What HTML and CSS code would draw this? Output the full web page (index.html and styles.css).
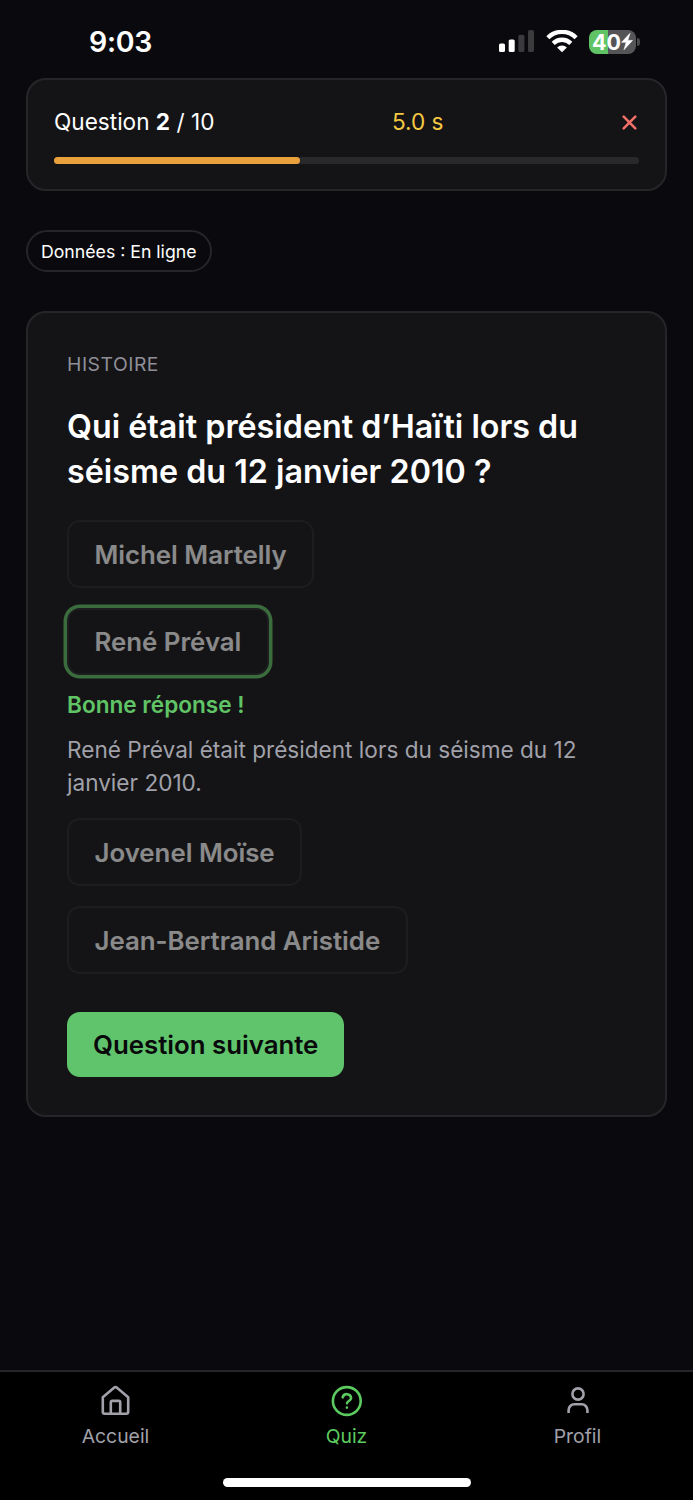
FILE: index.html
```
<!DOCTYPE html>
<html lang="fr">
<head>
    <meta charset="UTF-8">
    <meta name="viewport" content="width=device-width, initial-scale=1.0">
    <title>Quiz</title>
    <link rel="stylesheet" href="styles.css">
</head>
<body>
    <header class="status-bar">
        <div class="clock">9:03</div>
        <div class="status-icons">
            <svg class="signal" width="36" height="24" viewBox="0 0 36 24">
                <rect x="0" y="13.5" width="6" height="8.5" rx="1.6" fill="#fff"/>
                <rect x="9.7" y="9.5" width="6" height="12.5" rx="1.6" fill="#fff"/>
                <rect x="19.4" y="4.7" width="6" height="17.3" rx="1.6" fill="#3b3b3e"/>
                <rect x="29" y="0" width="6" height="22" rx="1.6" fill="#3b3b3e"/>
            </svg>
            <svg class="wifi" width="32" height="24" viewBox="0 0 32 24">
                <g fill="none" stroke="#fff" stroke-width="4.4">
                    <path d="M1.9 7.7A20 20 0 0 1 30.1 7.7"/>
                    <path d="M7.2 13.4A12.5 12.5 0 0 1 24.8 13.4"/>
                </g>
                <path d="M16 22.3L11.1 17.4A7 7 0 0 1 20.9 17.4Z" fill="#fff"/>
            </svg>
            <div class="battery">
                <div class="battery-body">
                    <span>40</span>
                    <svg width="12" height="17" viewBox="0 0 12 17"><path d="M9 .3L.6 9.3h4.6L3 16.7l8.5-9.3H6.8z" fill="#fff" stroke="#fff" stroke-width=".6"/></svg>
                </div>
                <div class="battery-tip"></div>
            </div>
        </div>
    </header>

    <main>
        <section class="card progress-card">
            <div class="progress-info">
                <div>Question <strong>2</strong> / 10</div>
                <div class="timer">5.0 s</div>
                <button class="close" aria-label="Quitter">
                    <svg width="15" height="15" viewBox="0 0 15 15"><path d="M1.7 1.7l11.6 11.6M13.3 1.700l-11.6 11.6" stroke="#f5706b" stroke-width="2.5" stroke-linecap="round"/></svg>
                </button>
            </div>
            <div class="progress"><div class="progress-fill"></div></div>
        </section>

        <div class="badge">Données : En ligne</div>

        <section class="card question-card">
            <div class="category">Histoire</div>
            <h1>Qui était président d’Haïti lors du séisme du 12 janvier 2010 ?</h1>
            <ul class="answers">
                <li><button class="answer" disabled>Michel Martelly</button></li>
                <li>
                    <button class="answer correct" disabled>René Préval</button>
                    <div class="feedback">Bonne réponse !</div>
                    <p class="explanation">René Préval était président lors du séisme du 12 janvier 2010.</p>
                </li>
                <li><button class="answer" disabled>Jovenel Moïse</button></li>
                <li><button class="answer" disabled>Jean-Bertrand Aristide</button></li>
            </ul>
            <button class="next">Question suivante</button>
        </section>
    </main>

    <nav class="tab-bar">
        <div class="tabs">
            <a href="#" class="tab">
                <svg width="32" height="32" viewBox="0 0 32 32"><path d="M2.8 12.2L14.300 2.600a1.900 1.900 0 0 1 2.400 0L28.200 12.200V26.800a2 2 0 0 1-2 2H4.800a2 2 0 0 1-2-2zM10.800 28.500V17.300a1.400 1.400 0 0 1 1.400-1.400h6.600a1.400 1.400 0 0 1 1.400 1.400v11.200"/></svg>
                Accueil
            </a>
            <a href="#" class="tab active">
                <svg width="32" height="32" viewBox="0 0 32 32"><circle cx="15.8" cy="16" r="13.9"/><path d="M11.7 12.300a4.300 4.300 0 0 1 8.400.6c0 2.700-4.100 3.300-4.100 5.300M15.900 22.500v.1"/></svg>
                Quiz
            </a>
            <a href="#" class="tab">
                <svg width="32" height="32" viewBox="0 0 32 32"><circle cx="16" cy="9" r="5.6"/><path d="M6.600 28v-3a5.700 5.700 0 0 1 5.700-5.700h7.400a5.700 5.700 0 0 1 5.700 5.700V28"/></svg>
                Profil
            </a>
        </div>
        <div class="home-indicator"></div>
    </nav>
</body>
</html>
```
FILE: styles.css
```
* {
    box-sizing: border-box;
}
body {
    font-family: Inter, sans-serif;
    background-color: #0a0a0e;
    color: #fff;
    display: flex;
    flex-direction: column;
    height: 1500px;
    margin: 0;
}
button {
    font-family: inherit;
    border: none;
    cursor: pointer;
}
.status-bar {
    display: flex;
    justify-content: space-between;
    align-items: center;
    height: 78px;
    padding: 5px 53px 0 89px;
}
.clock {
    font-size: 28.5px;
    font-weight: 600;
    letter-spacing: -0.3px;
}
.status-icons {
    display: flex;
    align-items: center;
    gap: 11px;
    height: 24px;
}
.battery {
    display: flex;
    align-items: center;
    gap: 1px;
}
.battery-body {
    display: flex;
    align-items: center;
    justify-content: center;
    width: 47px;
    height: 24px;
    border-radius: 8px;
    background: linear-gradient(to right, #60c466 40%, #555558 40%);
    font-size: 21.5px;
    font-weight: 700;
}
.battery-tip {
    width: 3px;
    height: 8px;
    border-radius: 0 3px 3px 0;
    background-color: #4a4a4d;
}
main {
    flex: 1;
    padding: 0 26px;
}
.card {
    background-color: #141416;
    border: 2px solid #262629;
    border-radius: 20px;
}
.progress-card {
    height: 113px;
    padding: 25px 26px 0;
}
.progress-info {
    display: flex;
    justify-content: space-between;
    align-items: center;
    height: 32px;
    font-size: 22.6px;
}
.timer {
    color: #f5c842;
}
.close {
    display: flex;
    padding: 3px 2px 0 1px;
    background: none;
}
.progress {
    height: 7px;
    margin-top: 20px;
    border-radius: 4px;
    background-color: #29292b;
}
.progress-fill {
    width: 42%;
    height: 100%;
    border-radius: 4px;
    background-color: #e9a13b;
}
.badge {
    display: inline-block;
    height: 42px;
    margin: 39px 0;
    padding: 0 13px;
    border: 2px solid #262629;
    border-radius: 21px;
    font-size: 17.7px;
    line-height: 39px;
    vertical-align: top;
}
.question-card {
    height: 806px;
    padding: 37px 39px;
}
.category {
    color: #8f8f98;
    font-size: 19.35px;
    line-height: 28px;
    letter-spacing: 0.5px;
    text-transform: uppercase;
}
h1 {
    margin: 26px 0 26px;
    font-size: 32.25px;
    font-weight: 600;
    line-height: 45px;
}
.answers {
    display: flex;
    flex-direction: column;
    gap: 20px;
    margin: 0;
    padding: 0;
    list-style: none;
}
.answer {
    display: block;
    height: 68px;
    padding: 0 25.5px;
    border: 2px solid #262629;
    border-radius: 13px;
    background-color: #141416;
    color: #fff;
    font-size: 25.8px;
    font-weight: 600;
    opacity: 0.5;
}
.answer.correct {
    height: 67px;
    box-shadow: 0 0 0 3.5px #60c466;
}
.feedback {
    margin-top: 14px;
    color: #60c466;
    font-size: 22.6px;
    font-weight: 600;
    line-height: 32px;
}
.explanation {
    margin: 13px 0 -1px;
    color: #a1a1aa;
    font-size: 22.6px;
    line-height: 32.5px;
}
.next {
    display: block;
    height: 65px;
    margin-top: 38px;
    padding: 0 26px;
    border-radius: 13px;
    background-color: #60c46c;
    color: #09090b;
    font-size: 25.8px;
    font-weight: 600;
}
.tab-bar {
    height: 130px;
    border-top: 2px solid #262629;
    background-color: #000;
}
.tabs {
    display: flex;
    height: 106px;
    padding-top: 13px;
}
.tab {
    flex: 1;
    display: flex;
    flex-direction: column;
    align-items: center;
    gap: 7px;
    color: #a1a1aa;
    font-size: 19.35px;
    line-height: 24px;
    text-decoration: none;
}
.tab.active {
    color: #5ccb5f;
}
.tab svg {
    fill: none;
    stroke: currentColor;
    stroke-width: 2.6;
    stroke-linejoin: round;
}
.tab.active svg {
    stroke-linecap: round;
}
.home-indicator {
    width: 248px;
    height: 9px;
    margin: 0 auto;
    border-radius: 5px;
    background-color: #fff;
}
```
